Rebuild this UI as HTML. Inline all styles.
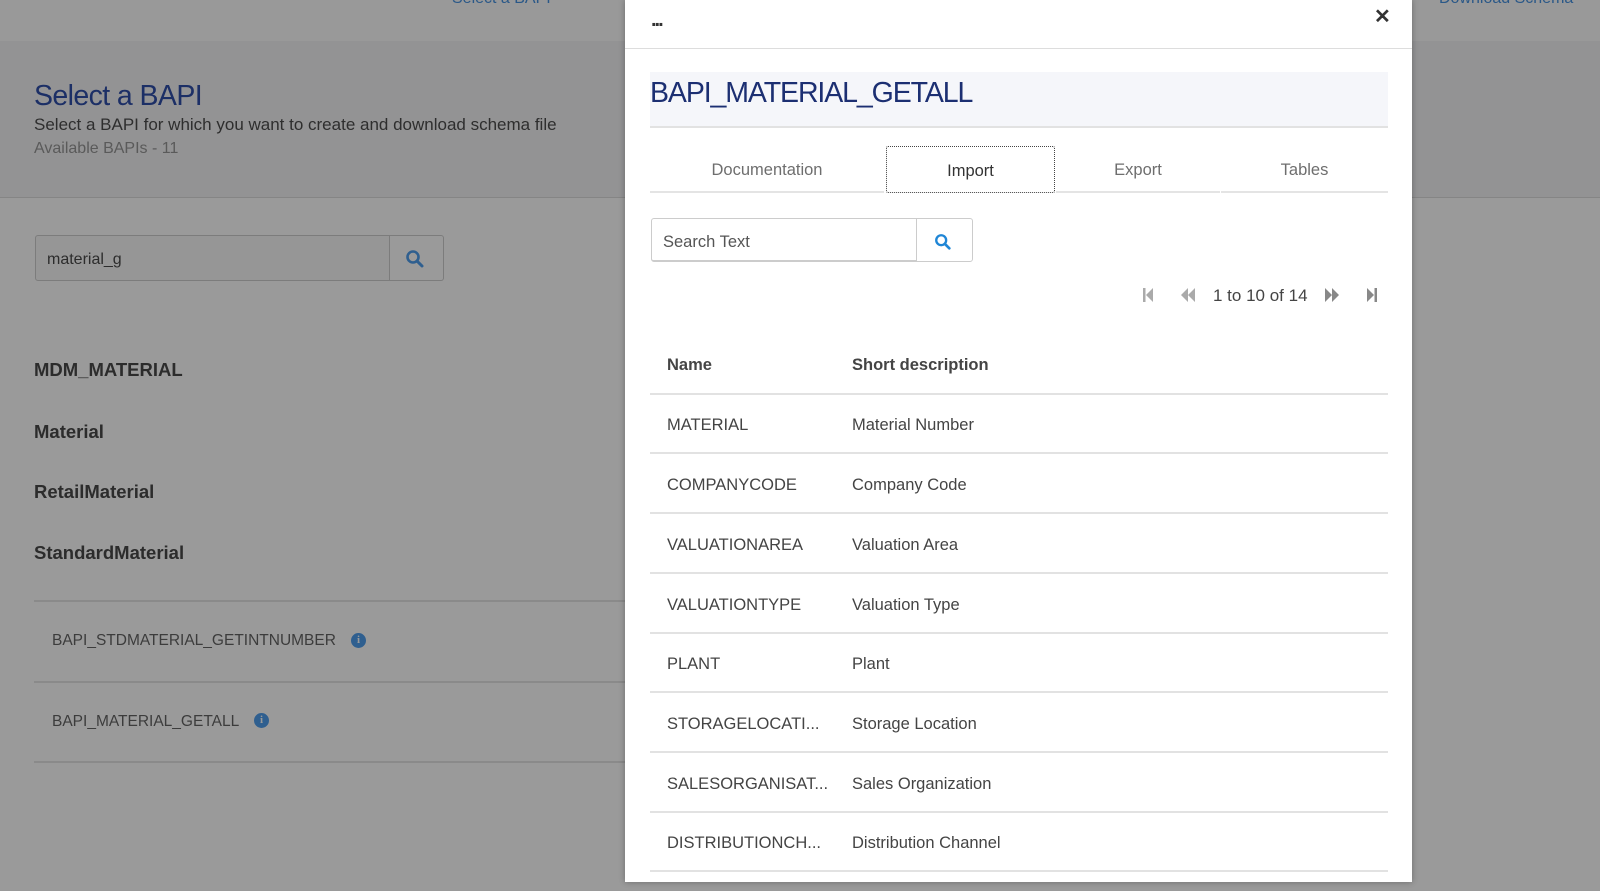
<!DOCTYPE html>
<html><head><meta charset="utf-8"><style>
*{margin:0;padding:0;box-sizing:border-box}
body{width:1600px;height:891px;overflow:hidden;background:#9a9a9a;font-family:"Liberation Sans",sans-serif;position:relative;color:#333}
.a{position:absolute;white-space:nowrap}
.topbar{left:0;top:0;width:1600px;height:41px;background:#999}
.hdr{left:0;top:41px;width:1600px;height:157px;background:#939394;border-bottom:1px solid #858585}
.modal{left:625px;top:0;width:787px;height:882px;background:#fff;box-shadow:0 0 6px rgba(0,0,0,.3)}
.row{left:650px;width:738px;height:2px;background:#e2e2e2}
.cell{font-size:16.5px;color:#444;line-height:20px}
.tab{font-size:16.5px;color:#6e6e6e;text-align:center;line-height:48px;top:146px;height:47px}
.lbl{font-size:18.5px;font-weight:bold;color:#2c2c2c;left:34px}
.bapi{font-size:15.5px;color:#3c3c3c;left:52px}
.info{width:15px;height:15px;border-radius:50%;background:#2f5f8f;color:#9a9a9a;font:bold 11px "Liberation Serif",serif;text-align:center;line-height:15px}
</style></head><body>
<div class="a topbar"></div>
<div class="a" style="left:452px;top:-10px;font-size:16px;color:#2a5888">Select a BAPI</div>
<div class="a" style="left:1439px;top:-10px;font-size:16px;color:#2a5888">Download Schema</div>
<div class="a hdr"></div>
<div class="a" style="left:34px;top:80px;font-size:28.5px;color:#1c2f66;letter-spacing:-0.6px">Select a BAPI</div>
<div class="a" style="left:34px;top:115px;font-size:17px;color:#2e2e2e">Select a BAPI for which you want to create and download schema file</div>
<div class="a" style="left:34px;top:140px;font-size:16px;color:#5a5a5a">Available BAPIs - 11</div>
<div class="a" style="left:35px;top:235px;width:355px;height:46px;border:1px solid #7c7c7c;border-radius:3px 0 0 3px;background:#969696"></div>
<div class="a" style="left:47px;top:251px;font-size:16px;color:#2c2c2c">material_g</div>
<div class="a" style="left:389px;top:235px;width:55px;height:46px;border:1px solid #7c7c7c;border-left:none;border-radius:0 3px 3px 0"></div>
<svg class="a" style="left:405px;top:249px" width="20" height="20" viewBox="0 0 20 20"><circle cx="8" cy="8" r="5.5" fill="none" stroke="#2f5f8f" stroke-width="2.6"/><line x1="12" y1="12" x2="17" y2="17" stroke="#2f5f8f" stroke-width="3" stroke-linecap="round"/></svg>
<div class="a lbl" style="top:359px">MDM_MATERIAL</div>
<div class="a lbl" style="top:421px">Material</div>
<div class="a lbl" style="top:481px">RetailMaterial</div>
<div class="a lbl" style="top:542px">StandardMaterial</div>
<div class="a" style="left:34px;top:600px;width:600px;height:2px;background:#8a8a8a"></div>
<div class="a bapi" style="top:632px">BAPI_STDMATERIAL_GETINTNUMBER</div>
<div class="a info" style="left:351px;top:633px">i</div>
<div class="a" style="left:34px;top:681px;width:600px;height:2px;background:#8a8a8a"></div>
<div class="a bapi" style="top:713px">BAPI_MATERIAL_GETALL</div>
<div class="a info" style="left:254px;top:713px">i</div>
<div class="a" style="left:34px;top:761px;width:600px;height:2px;background:#8a8a8a"></div>

<div class="a modal"></div>
<div class="a" style="left:651px;top:9px;font-size:20px;font-weight:bold;color:#333;letter-spacing:-2px">...</div>
<div class="a" style="left:1374px;top:4px;font-size:20px;font-weight:bold;color:#333">✕</div>
<div class="a" style="left:625px;top:48px;width:787px;height:1px;background:#ddd"></div>
<div class="a" style="left:650px;top:72px;width:738px;height:56px;background:#f5f6fa;border-bottom:2px solid #e2e2e2"></div>
<div class="a" style="left:650px;top:77px;font-size:28.5px;color:#1c2f72;letter-spacing:-1.1px">BAPI_MATERIAL_GETALL</div>
<div class="a tab" style="left:650px;width:234px;border-bottom:2px solid #e4e4e4">Documentation</div>
<div class="a tab" style="left:886px;width:169px;border:1px dotted #444;border-radius:2px;color:#333">Import</div>
<div class="a tab" style="left:1056px;width:164px;border-bottom:2px solid #e4e4e4">Export</div>
<div class="a tab" style="left:1221px;width:167px;border-bottom:2px solid #e4e4e4">Tables</div>
<div class="a" style="left:651px;top:218px;width:266px;height:44px;border:1px solid #ccc;border-bottom:2px solid #ccc;border-radius:3px 0 0 3px"></div>
<div class="a" style="left:663px;top:233px;font-size:16.5px;color:#555">Search Text</div>
<div class="a" style="left:916px;top:218px;width:57px;height:44px;border:1px solid #ccc;border-radius:0 3px 3px 0"></div>
<svg class="a" style="left:934px;top:233px" width="18" height="18" viewBox="0 0 20 20"><circle cx="8" cy="8" r="5.5" fill="none" stroke="#1f86d6" stroke-width="2.6"/><line x1="12" y1="12" x2="17" y2="17" stroke="#1f86d6" stroke-width="3" stroke-linecap="round"/></svg>
<svg class="a" style="left:1142px;top:287px" width="12" height="16" viewBox="0 0 12 16"><rect x="1" y="1" width="2.5" height="14" fill="#aaa"/><path d="M11 1 L4 8 L11 15Z" fill="#aaa"/></svg>
<svg class="a" style="left:1180px;top:287px" width="16" height="16" viewBox="0 0 16 16"><path d="M8 1 L1 8 L8 15Z M15 1 L8 8 L15 15Z" fill="#aaa"/></svg>
<div class="a" style="left:1213px;top:286px;font-size:17px;color:#444">1 to 10 of 14</div>
<svg class="a" style="left:1324px;top:287px" width="16" height="16" viewBox="0 0 16 16"><path d="M1 1 L8 8 L1 15Z M8 1 L15 8 L8 15Z" fill="#888"/></svg>
<svg class="a" style="left:1366px;top:287px" width="12" height="16" viewBox="0 0 12 16"><path d="M1 1 L8 8 L1 15Z" fill="#888"/><rect x="8.5" y="1" width="2.5" height="14" fill="#888"/></svg>

<div class="a cell" style="left:667px;top:355px;font-weight:bold">Name</div>
<div class="a cell" style="left:852px;top:355px;font-weight:bold">Short description</div>
<div class="a row" style="top:393px"></div>
<div class="a cell" style="left:667px;top:415px">MATERIAL</div><div class="a cell" style="left:852px;top:415px">Material Number</div>
<div class="a row" style="top:452px"></div>
<div class="a cell" style="left:667px;top:475px">COMPANYCODE</div><div class="a cell" style="left:852px;top:475px">Company Code</div>
<div class="a row" style="top:512px"></div>
<div class="a cell" style="left:667px;top:535px">VALUATIONAREA</div><div class="a cell" style="left:852px;top:535px">Valuation Area</div>
<div class="a row" style="top:572px"></div>
<div class="a cell" style="left:667px;top:595px">VALUATIONTYPE</div><div class="a cell" style="left:852px;top:595px">Valuation Type</div>
<div class="a row" style="top:632px"></div>
<div class="a cell" style="left:667px;top:654px">PLANT</div><div class="a cell" style="left:852px;top:654px">Plant</div>
<div class="a row" style="top:691px"></div>
<div class="a cell" style="left:667px;top:714px">STORAGELOCATI...</div><div class="a cell" style="left:852px;top:714px">Storage Location</div>
<div class="a row" style="top:751px"></div>
<div class="a cell" style="left:667px;top:774px">SALESORGANISAT...</div><div class="a cell" style="left:852px;top:774px">Sales Organization</div>
<div class="a row" style="top:811px"></div>
<div class="a cell" style="left:667px;top:833px">DISTRIBUTIONCH...</div><div class="a cell" style="left:852px;top:833px">Distribution Channel</div>
<div class="a row" style="top:870px"></div>
</body></html>
